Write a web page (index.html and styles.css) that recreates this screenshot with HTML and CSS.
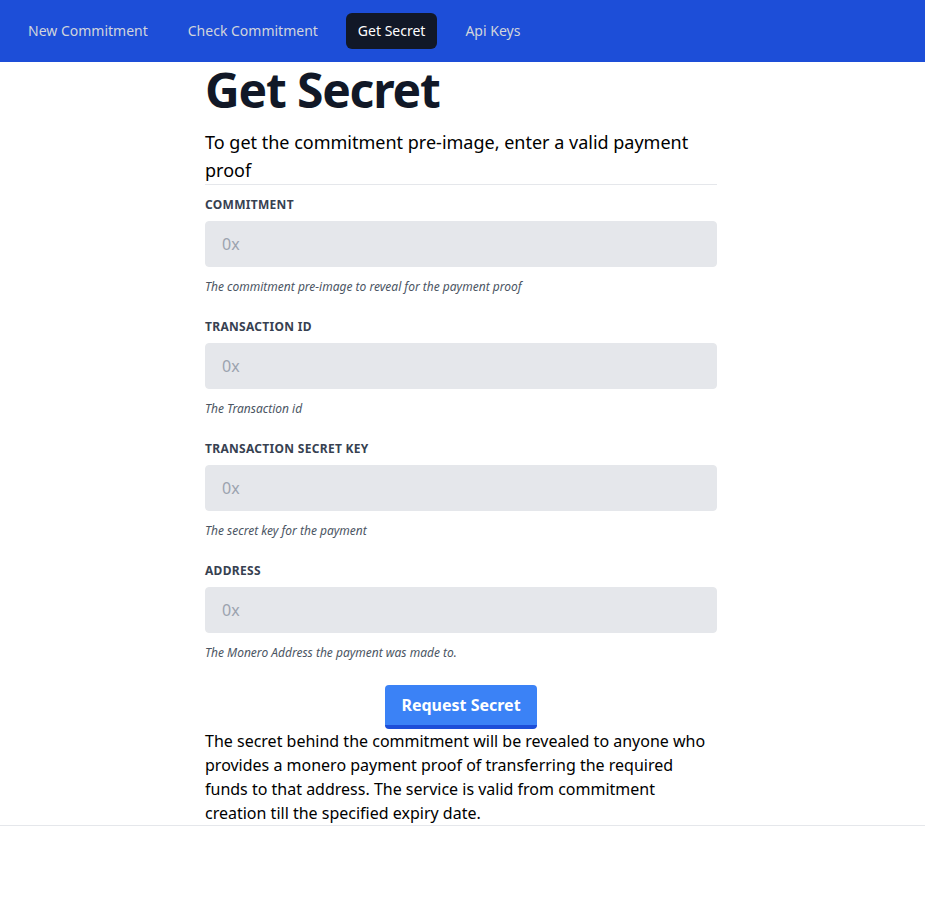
FILE: index.html
```
<!DOCTYPE html>
<html>
<head>
<meta charset="utf-8">
<link rel="stylesheet" href="styles.css">
</head>
<body>
<nav class="nav">
  <a class="nav-link">New Commitment</a>
  <a class="nav-link">Check Commitment</a>
  <a class="nav-link active">Get Secret</a>
  <a class="nav-link">Api Keys</a>
</nav>
<main class="main">
  <h1 class="title">Get Secret</h1>
  <p class="lead">To get the commitment pre-image, enter a valid payment proof</p>
  <hr class="rule">
  <form class="form">
    <div class="field">
      <label class="label">Commitment</label>
      <input class="input" placeholder="0x">
      <p class="help">The commitment pre-image to reveal for the payment proof</p>
    </div>
    <div class="field">
      <label class="label">Transaction ID</label>
      <input class="input" placeholder="0x">
      <p class="help">The Transaction id</p>
    </div>
    <div class="field">
      <label class="label">Transaction Secret Key</label>
      <input class="input" placeholder="0x">
      <p class="help">The secret key for the payment</p>
    </div>
    <div class="field">
      <label class="label">Address</label>
      <input class="input" placeholder="0x">
      <p class="help">The Monero Address the payment was made to.</p>
    </div>
    <div class="actions">
      <button type="button" class="btn">Request Secret</button>
    </div>
  </form>
  <p class="note">The secret behind the commitment will be revealed to anyone who provides a monero payment proof of transferring the required funds to that address. The service is valid from commitment creation till the specified expiry date.</p>
</main>
<hr class="footer-rule">
</body>
</html>
```
FILE: styles.css
```
* { box-sizing: border-box; }
html, body { margin: 0; padding: 0; }
body {
  font-family: "Noto Sans", sans-serif;
  color: #000;
  background: #fff;
}
.nav {
  height: 62px;
  background: #1d4ed8;
  display: flex;
  align-items: center;
  gap: 16px;
  padding: 0 16px;
}
.nav-link {
  display: block;
  padding: 8px 12px;
  font-size: 14px;
  line-height: 20px;
  color: #d1d5db;
  border-radius: 6px;
}
.nav-link.active {
  background: #111827;
  color: #fff;
}
.main {
  width: 515px;
  padding-right: 3px;
  margin: 0 auto;
}
.title {
  margin: 0;
  font-size: 48px;
  line-height: 1;
  font-weight: 700;
  letter-spacing: -0.025em;
  color: #111827;
  padding-top: 4px;
}
.lead {
  margin: 14px 0 0;
  font-size: 18px;
  line-height: 28px;
}
.rule {
  margin: 0;
  border: 0;
  border-top: 1px solid #e5e7eb;
}
.form {
  padding-top: 12px;
  display: flex;
  flex-direction: column;
}
.field {
  margin-bottom: 24px;
}
.label {
  display: block;
  text-transform: uppercase;
  letter-spacing: 0.025em;
  color: #374151;
  font-size: 12px;
  line-height: 16px;
  font-weight: 700;
  margin-bottom: 8px;
}
.input {
  display: block;
  width: 100%;
  appearance: none;
  background: #e5e7eb;
  color: #374151;
  border: 1px solid #e5e7eb;
  border-radius: 4px;
  padding: 12px 16px;
  font-family: inherit;
  font-size: 16px;
  line-height: 20px;
  margin-bottom: 12px;
  outline: none;
}
.input::placeholder { color: #9ca3af; }
.help {
  margin: 0;
  color: #4b5563;
  font-size: 12px;
  line-height: 16px;
  font-style: italic;
}
.actions {
  display: flex;
  justify-content: center;
}
.btn {
  font-family: inherit;
  background: #3b82f6;
  color: #fff;
  font-weight: 700;
  font-size: 16px;
  line-height: 24px;
  padding: 8px 16px;
  border: 0;
  border-bottom: 4px solid #1d4ed8;
  border-radius: 4px;
}
.note {
  margin: 0;
  font-size: 16px;
  line-height: 24px;
}
.footer-rule {
  margin: 0;
  border: 0;
  border-top: 1px solid #e5e7eb;
}
```
